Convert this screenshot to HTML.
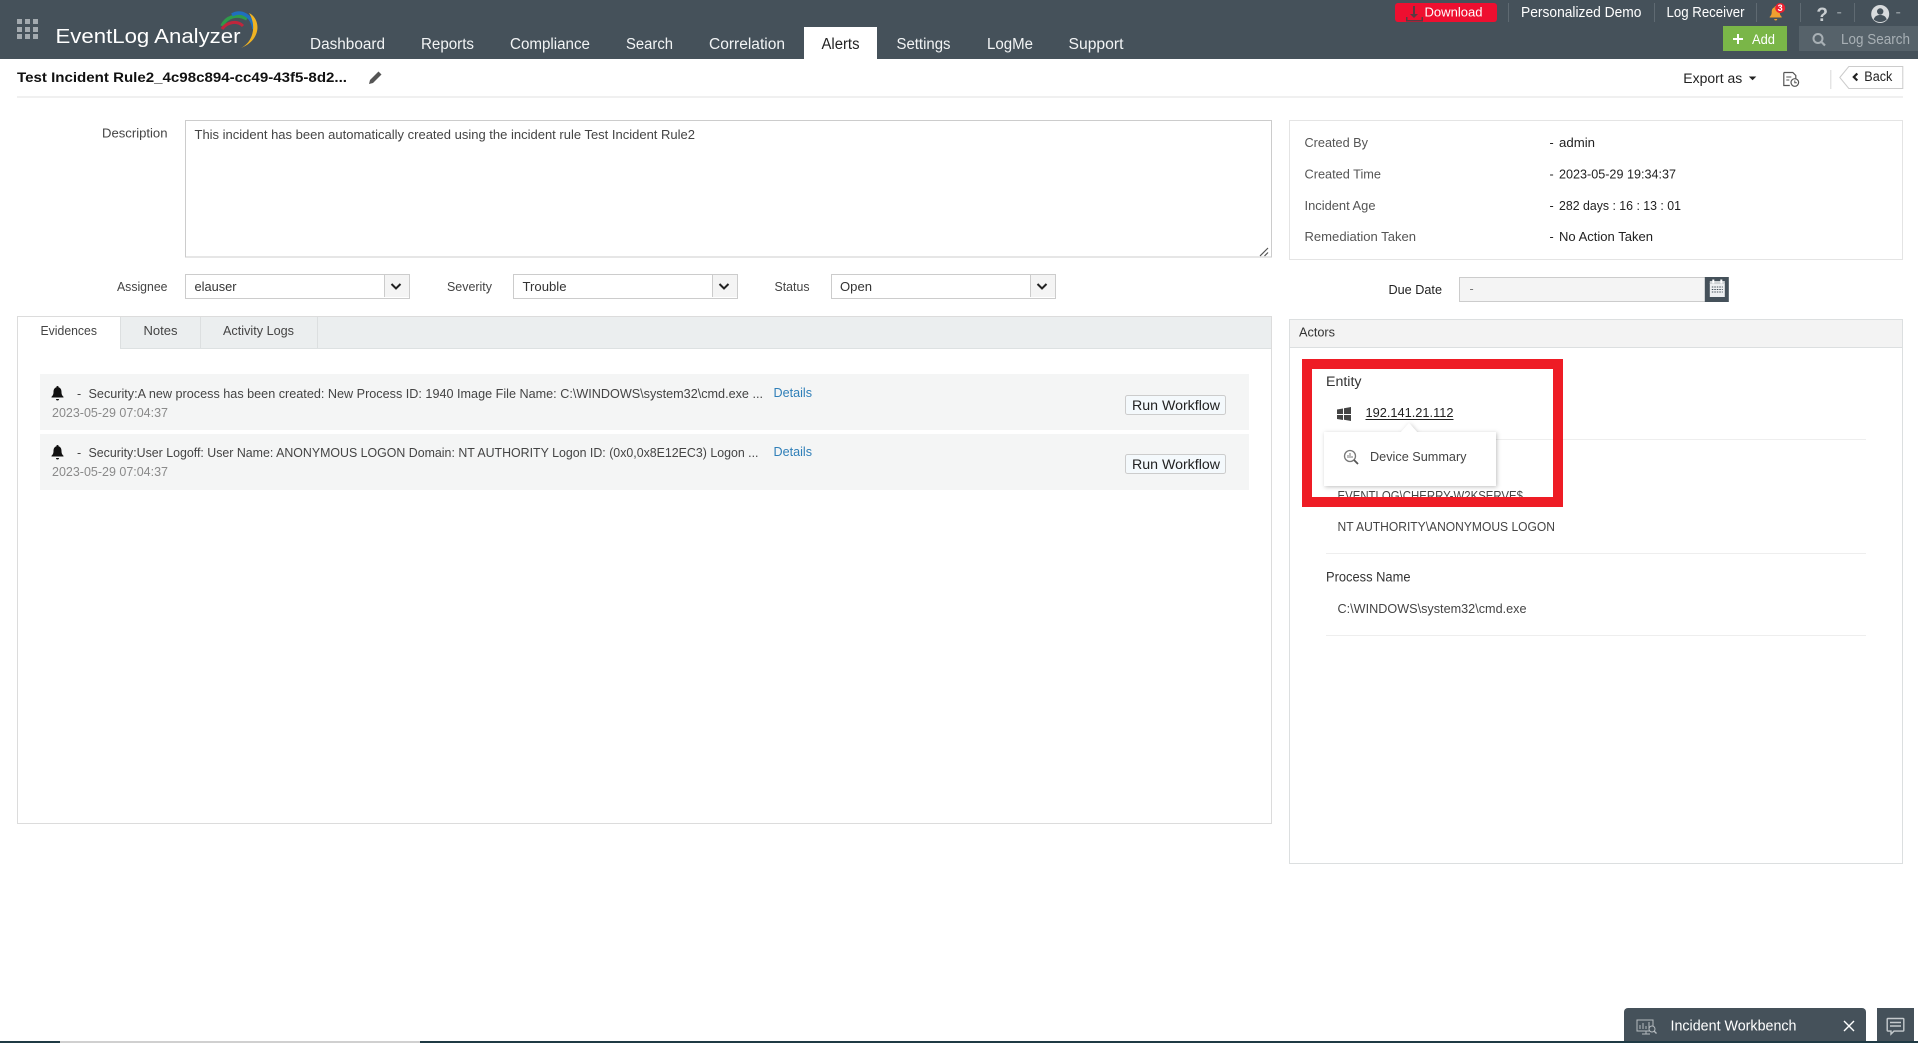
<!DOCTYPE html>
<html lang="en">
<head>
<meta charset="utf-8">
<title>EventLog Analyzer - Incident</title>
<style>
html,body{margin:0;padding:0;background:#fff;width:1918px;height:1043px;overflow:hidden}
svg{display:block;font-family:"Liberation Sans",Arial,sans-serif}
text{white-space:pre}
</style>
</head>
<body>
<svg xmlns="http://www.w3.org/2000/svg" width="1918" height="1043" viewBox="0 0 1918 1043">
<rect width="1918" height="1043" fill="#fff"/>

<!-- Header -->
<g>
<rect width="1918" height="59" fill="#45515a"/>
<g fill="#a3aaaf">
<rect x="17" y="19" width="5" height="5"/><rect x="25" y="19" width="5" height="5"/><rect x="33" y="19" width="5" height="5"/>
<rect x="17" y="27" width="5" height="5"/><rect x="25" y="27" width="5" height="5"/><rect x="33" y="27" width="5" height="5"/>
<rect x="17" y="34" width="5" height="5"/><rect x="25" y="34" width="5" height="5"/><rect x="33" y="34" width="5" height="5"/>
</g>
<text x="55.500" y="43" font-size="20.500" fill="#fff" textLength="185" lengthAdjust="spacingAndGlyphs">EventLog Analyzer</text>
<path d="M222 26C226 17 237 13 247 19" fill="none" stroke="#2f9a4a" stroke-width="3.500"/>
<path d="M222 29C227 22 237 20 243 26" fill="none" stroke="#c0263c" stroke-width="3"/>
<path d="M232 15C241 10 252 15 254 29" fill="none" stroke="#1f6fbf" stroke-width="3.500"/>
<path d="M249 13C260 18 263 39 241 48C253 42 257 26 249 13Z" fill="#f0b323"/>

<rect x="804" y="27" width="73" height="32" fill="#fff"/>
<g font-size="15.500" fill="#f2f4f5">
<text x="310" y="49" textLength="75" lengthAdjust="spacingAndGlyphs">Dashboard</text>
<text x="421" y="49" textLength="53" lengthAdjust="spacingAndGlyphs">Reports</text>
<text x="510" y="49" textLength="80" lengthAdjust="spacingAndGlyphs">Compliance</text>
<text x="626" y="49" textLength="47" lengthAdjust="spacingAndGlyphs">Search</text>
<text x="709" y="49" textLength="76" lengthAdjust="spacingAndGlyphs">Correlation</text>
<text x="821.500" y="49" textLength="38" lengthAdjust="spacingAndGlyphs" fill="#222">Alerts</text>
<text x="896.500" y="49" textLength="54" lengthAdjust="spacingAndGlyphs">Settings</text>
<text x="987" y="49" textLength="46" lengthAdjust="spacingAndGlyphs">LogMe</text>
<text x="1068.500" y="49" textLength="55" lengthAdjust="spacingAndGlyphs">Support</text>
</g>

<rect x="1395" y="3" width="102" height="19" rx="3" fill="#ee0f30"/>
<path d="M1413 6h2v8h3l-4 4-4-4h3zM1406 17h1.500v3h14v-3h1.500v4.500h-17z" fill="#5a3a42"/>
<text x="1424.500" y="16.500" font-size="13" fill="#fff" textLength="58" lengthAdjust="spacingAndGlyphs">Download</text>
<g fill="#5f6a72">
<rect x="1508" y="3" width="1" height="19"/><rect x="1654" y="3" width="1" height="19"/><rect x="1756" y="3" width="1" height="19"/><rect x="1800" y="3" width="1" height="19"/><rect x="1854" y="3" width="1" height="19"/>
</g>
<text x="1521" y="17" font-size="14.500" fill="#fff" textLength="120.500" lengthAdjust="spacingAndGlyphs">Personalized Demo</text>
<text x="1666.500" y="17" font-size="14.500" fill="#fff" textLength="78" lengthAdjust="spacingAndGlyphs">Log Receiver</text>
<g transform="translate(-1.800 0)">
<path transform="translate(1771.500 6)" d="M6 0a1 1 0 0 1 1 1.200c2.300.6 3 2.600 3 4.800 0 2.500.7 3.600 2 4.800v.7H0v-.7c1.300-1.200 2-2.300 2-4.800 0-2.200.7-4.200 3-4.800A1 1 0 0 1 6 0zM4.500 13h3a1.500 1.500 0 0 1-3 0z" fill="#f0a030"/>
<circle cx="1782" cy="8" r="5" fill="#ee2030"/>
<text x="1782" y="11" font-size="9" font-weight="bold" fill="#fff" text-anchor="middle">3</text>
<text x="1824" y="21" font-size="19" font-weight="bold" fill="#c9ced1" text-anchor="middle">?</text>
<rect x="1839" y="12" width="4" height="1.500" fill="#8d969c"/>
<circle cx="1882" cy="14" r="9" fill="#d8dbdd"/>
<circle cx="1882" cy="11.500" r="3.200" fill="#45515a"/>
<path d="M1875.500 19.500c1-3.500 3.500-4.500 6.500-4.500s5.500 1 6.500 4.500c-2 1.800-4 2.500-6.500 2.500s-4.500-.7-6.500-2.500z" fill="#45515a"/>
<rect x="1898" y="12" width="4" height="1.500" fill="#8d969c"/>
</g>

<rect x="1723" y="26" width="64" height="25" fill="#7ab648"/>
<path d="M1737 34h2v4h4v2h-4v4h-2v-4h-4v-2h4z" fill="#fff"/>
<text x="1752" y="44" font-size="13.500" fill="#fff" textLength="23" lengthAdjust="spacingAndGlyphs">Add</text>
<rect x="1799" y="26" width="119" height="25" fill="#56626a"/>
<circle cx="1818" cy="38.500" r="4.500" fill="none" stroke="#a8b0b5" stroke-width="2"/>
<path d="M1821.500 42l3.500 3.500" stroke="#a8b0b5" stroke-width="2.200"/>
<text x="1841" y="44" font-size="14.500" fill="#a8b0b5" textLength="69" lengthAdjust="spacingAndGlyphs">Log Search</text>
</g>

<!-- Title row -->
<g>
<text x="17" y="82" font-size="13.500" font-weight="bold" fill="#111" textLength="330" lengthAdjust="spacingAndGlyphs">Test Incident Rule2_4c98c894-cc49-43f5-8d2...</text>
<path d="M369 84l1-4 8.500-8.500 3 3L373 83z" fill="#555"/>
<rect x="17" y="96.500" width="1886" height="1" fill="#e2e2e2"/>
<g transform="translate(-1.700 0)">
<text x="1685" y="83" font-size="13.500" fill="#222" textLength="59" lengthAdjust="spacingAndGlyphs">Export as</text>
<path d="M1750.500 76.500h7.500l-3.750 3.700z" fill="#222"/>
<path d="M1785.500 72.500h9l3 3v3M1785.500 72.500v13h6" fill="none" stroke="#555" stroke-width="1.200"/>
<circle cx="1796.500" cy="82.500" r="3.800" fill="#fff" stroke="#555" stroke-width="1.200"/>
<path d="M1796.500 80.500v2.200h2M1788 77h5M1788 80h3" fill="none" stroke="#555"/>
<rect x="1832" y="70" width="1" height="19" fill="#d8d8d8"/>
<path d="M1841.500 77.500l9-11h54v22h-54z" fill="#fff" stroke="#ccc"/>
<path d="M1859 73.500l-3.500 3.500 3.500 3.500" fill="none" stroke="#222" stroke-width="2.200"/>
<text x="1866" y="81" font-size="13.500" fill="#222" textLength="28" lengthAdjust="spacingAndGlyphs">Back</text>
</g>
</g>

<!-- Description and fields -->
<g font-size="12.500" fill="#444">
<text x="102" y="137.500" textLength="65.500" lengthAdjust="spacingAndGlyphs">Description</text>
<rect x="185.500" y="120.500" width="1086" height="136.500" fill="#fff" stroke="#ccc"/>
<text x="194.500" y="139" textLength="500.500" lengthAdjust="spacingAndGlyphs">This incident has been automatically created using the incident rule Test Incident Rule2</text>
<path d="M1260 256l8-8M1264.500 256l3.500-3.500" stroke="#555" stroke-width="1.200"/>

<text x="117" y="291" textLength="50.500" lengthAdjust="spacingAndGlyphs">Assignee</text>
<rect x="185.500" y="274.500" width="224" height="24" fill="#fff" stroke="#ccc"/>
<rect x="384" y="275" width="25" height="22" fill="#f4f4f4"/><rect x="384" y="275" width="1" height="22" fill="#ccc"/>
<path d="M391.500 284l4.500 4.500 4.500-4.500" fill="none" stroke="#222" stroke-width="2"/>
<text x="194.500" y="291" fill="#333" textLength="42" lengthAdjust="spacingAndGlyphs">elauser</text>

<text x="447" y="291" textLength="45" lengthAdjust="spacingAndGlyphs">Severity</text>
<rect x="513.500" y="274.500" width="224" height="24" fill="#fff" stroke="#ccc"/>
<rect x="712" y="275" width="25" height="22" fill="#f4f4f4"/><rect x="712" y="275" width="1" height="22" fill="#ccc"/>
<path d="M719.500 284l4.500 4.500 4.500-4.500" fill="none" stroke="#222" stroke-width="2"/>
<text x="522.500" y="291" fill="#333" textLength="44" lengthAdjust="spacingAndGlyphs">Trouble</text>

<text x="774.500" y="291" textLength="35" lengthAdjust="spacingAndGlyphs">Status</text>
<rect x="831.500" y="274.500" width="224" height="24" fill="#fff" stroke="#ccc"/>
<rect x="1030" y="275" width="25" height="22" fill="#f4f4f4"/><rect x="1030" y="275" width="1" height="22" fill="#ccc"/>
<path d="M1037.500 284l4.500 4.500 4.500-4.500" fill="none" stroke="#222" stroke-width="2"/>
<text x="840" y="291" fill="#333" textLength="32" lengthAdjust="spacingAndGlyphs">Open</text>
</g>

<!-- Tabs panel -->
<g font-size="12.500" fill="#444">
<rect x="17.500" y="316.500" width="1254" height="507" fill="#fff" stroke="#dcdcdc"/>
<rect x="18" y="317" width="1253" height="31" fill="#ebeeef"/>
<rect x="18" y="348" width="1253" height="1" fill="#dde1e2"/>
<rect x="18" y="317" width="102" height="32" fill="#fff"/>
<rect x="120" y="317" width="1" height="31" fill="#dcdfe0"/><rect x="200" y="317" width="1" height="31" fill="#dcdfe0"/><rect x="317" y="317" width="1" height="31" fill="#dcdfe0"/>
<text x="40.500" y="335" textLength="56.500" lengthAdjust="spacingAndGlyphs">Evidences</text>
<text x="143.500" y="335" textLength="34" lengthAdjust="spacingAndGlyphs">Notes</text>
<text x="223" y="335" textLength="71" lengthAdjust="spacingAndGlyphs">Activity Logs</text>

<rect x="40" y="374" width="1209" height="56" fill="#f4f5f5"/>
<path transform="translate(51.500 386)" d="M6 0a1 1 0 0 1 1 1.200c2.300.6 3 2.600 3 4.800 0 2.500.7 3.600 2 4.800v.7H0v-.7c1.300-1.200 2-2.300 2-4.800 0-2.200.7-4.200 3-4.800A1 1 0 0 1 6 0zM4.500 13h3a1.500 1.500 0 0 1-3 0z" fill="#111"/>
<text x="77" y="398" fill="#444">-</text>
<text x="88.500" y="398" textLength="674.500" lengthAdjust="spacingAndGlyphs">Security:A new process has been created: New Process ID: 1940 Image File Name: C:\WINDOWS\system32\cmd.exe ...</text>
<text x="52" y="417" fill="#8a8a8a" textLength="116" lengthAdjust="spacingAndGlyphs">2023-05-29 07:04:37</text>
<text x="773.500" y="397" fill="#2f7fb8" textLength="38.500" lengthAdjust="spacingAndGlyphs">Details</text>
<rect x="1125.500" y="395.500" width="100" height="19" rx="2" fill="#f4f9fc" stroke="#ccc"/>
<text x="1132" y="410" font-size="14" fill="#222" textLength="88" lengthAdjust="spacingAndGlyphs">Run Workflow</text>

<rect x="40" y="434" width="1209" height="56" fill="#f4f5f5"/>
<path transform="translate(51.500 445)" d="M6 0a1 1 0 0 1 1 1.200c2.300.6 3 2.600 3 4.800 0 2.500.7 3.600 2 4.800v.7H0v-.7c1.300-1.200 2-2.300 2-4.800 0-2.200.7-4.200 3-4.800A1 1 0 0 1 6 0zM4.500 13h3a1.500 1.500 0 0 1-3 0z" fill="#111"/>
<text x="77" y="457" fill="#444">-</text>
<text x="88.500" y="457" textLength="670" lengthAdjust="spacingAndGlyphs">Security:User Logoff: User Name: ANONYMOUS LOGON Domain: NT AUTHORITY Logon ID: (0x0,0x8E12EC3) Logon ...</text>
<text x="52" y="476" fill="#8a8a8a" textLength="116" lengthAdjust="spacingAndGlyphs">2023-05-29 07:04:37</text>
<text x="773.500" y="456" fill="#2f7fb8" textLength="38.500" lengthAdjust="spacingAndGlyphs">Details</text>
<rect x="1125.500" y="454.500" width="100" height="19" rx="2" fill="#f4f9fc" stroke="#ccc"/>
<text x="1132" y="469" font-size="14" fill="#222" textLength="88" lengthAdjust="spacingAndGlyphs">Run Workflow</text>
</g>

<!-- Info panel -->
<g font-size="12.500" fill="#555">
<rect x="1289.500" y="120.500" width="613" height="139" fill="#fff" stroke="#e4e4e4"/>
<text x="1304.500" y="147" textLength="63.500" lengthAdjust="spacingAndGlyphs">Created By</text>
<text x="1304.500" y="178.700" textLength="76.500" lengthAdjust="spacingAndGlyphs">Created Time</text>
<text x="1304.500" y="210" textLength="71" lengthAdjust="spacingAndGlyphs">Incident Age</text>
<text x="1304.500" y="241" textLength="111.500" lengthAdjust="spacingAndGlyphs">Remediation Taken</text>
<g fill="#222">
<text x="1549.500" y="147">-</text><text x="1549.500" y="178.700">-</text><text x="1549.500" y="210">-</text><text x="1549.500" y="241">-</text>
<text x="1559" y="147" textLength="36" lengthAdjust="spacingAndGlyphs">admin</text>
<text x="1559" y="178.700" textLength="117" lengthAdjust="spacingAndGlyphs">2023-05-29 19:34:37</text>
<text x="1559" y="210" textLength="122" lengthAdjust="spacingAndGlyphs">282 days : 16 : 13 : 01</text>
<text x="1559" y="241" textLength="94" lengthAdjust="spacingAndGlyphs">No Action Taken</text>
</g>
<text x="1388.500" y="294" fill="#222" textLength="53.500" lengthAdjust="spacingAndGlyphs">Due Date</text>
<rect x="1459.500" y="277.500" width="246" height="24" fill="#f4f4f4" stroke="#ccc"/>
<text x="1469.500" y="293" fill="#777">-</text>
<g transform="translate(-1.200 0)">
<rect x="1706" y="277" width="24" height="25" fill="#45515a"/>
<rect x="1711" y="283" width="15" height="14" fill="#eef0f1"/>
<rect x="1711" y="281" width="15" height="3" fill="#cfd3d5"/>
<rect x="1713.500" y="279.500" width="2" height="4" fill="#fff"/><rect x="1721.500" y="279.500" width="2" height="4" fill="#fff"/>
<path d="M1713 287h11M1713 289.500h11M1713 292h11" stroke="#45515a" stroke-dasharray="1.500 1" fill="none"/>
</g>
</g>

<!-- Actors panel -->
<g font-size="13" fill="#444">
<rect x="1289.500" y="319.500" width="613" height="544" fill="#fff" stroke="#dcdfe0"/>
<rect x="1290" y="320" width="612" height="27" fill="#f3f3f3"/>
<rect x="1290" y="347" width="612" height="1" fill="#dcdfe0"/>
<text x="1299" y="336.500" fill="#333" textLength="36" lengthAdjust="spacingAndGlyphs">Actors</text>

<text x="1326" y="386" fill="#333" font-size="13.500" textLength="35.500" lengthAdjust="spacingAndGlyphs">Entity</text>
<path d="M1337 409.500l6-1v5.500h-6zM1344 408.300l7-1.300v7h-7zM1337 415h6v5l-6-1zM1344 415h7v6l-7-1.200z" fill="#444"/>
<text x="1365.500" y="417" fill="#222" textLength="88" lengthAdjust="spacingAndGlyphs">192.141.21.112</text>
<rect x="1365.500" y="419" width="88" height="1" fill="#222"/>
<rect x="1326" y="439" width="540" height="1" fill="#eee"/>

<text x="1337.500" y="500" textLength="185.500" lengthAdjust="spacingAndGlyphs">EVENTLOG\CHERRY-W2KSERVE$</text>
<text x="1337.500" y="531" textLength="217.500" lengthAdjust="spacingAndGlyphs">NT AUTHORITY\ANONYMOUS LOGON</text>
<rect x="1326" y="553" width="540" height="1" fill="#eee"/>
<text x="1326" y="581.500" fill="#333" font-size="13.500" textLength="84.500" lengthAdjust="spacingAndGlyphs">Process Name</text>
<text x="1337.500" y="613" textLength="189" lengthAdjust="spacingAndGlyphs">C:\WINDOWS\system32\cmd.exe</text>
<rect x="1326" y="635" width="540" height="1" fill="#eee"/>

<!-- Popup -->
<defs>
<filter id="popshadow" x="-10%" y="-20%" width="120%" height="140%">
<feDropShadow dx="1" dy="1" stdDeviation="2" flood-color="#000" flood-opacity="0.25"/>
</filter>
</defs>
<path d="M1324 432h77l8-9 8 9h79v54h-172z" fill="#fff" filter="url(#popshadow)"/>
<circle cx="1350" cy="456" r="5.500" fill="none" stroke="#777" stroke-width="1.300"/>
<path d="M1354 460l4 4" stroke="#555" stroke-width="1.800"/>
<path d="M1348 458v-3M1350 458v-5M1352 458v-2" stroke="#777"/>
<text x="1370" y="461" fill="#444" textLength="96.500" lengthAdjust="spacingAndGlyphs">Device Summary</text>

<!-- Annotation -->
<path fill-rule="evenodd" d="M1302 359h261v148h-261zM1312 369v128h241v-128z" fill="#ee1c25"/>
</g>

<!-- Bottom -->
<g>
<rect x="0" y="1041" width="1918" height="2" fill="#1f3a44"/>
<rect x="60" y="1041" width="360" height="2" fill="#d0d0d0"/>
<path d="M1624 1041v-29a4 4 0 0 1 4-4h234a4 4 0 0 1 4 4v29z" fill="#45515a"/>
<rect x="1637" y="1020" width="16" height="11" fill="none" stroke="#b5bbbf" stroke-width="1"/>
<path d="M1640 1029v-4M1643 1029v-6M1646 1029v-3M1649 1029v-7M1642 1034h8M1646 1031v3" stroke="#b5bbbf" fill="none"/>
<circle cx="1652" cy="1029" r="3" fill="#45515a" stroke="#b5bbbf"/>
<path d="M1654 1031l2.500 2.500" stroke="#b5bbbf" stroke-width="1.300"/>
<text x="1670.500" y="1030.500" font-size="14.500" fill="#fff" textLength="126" lengthAdjust="spacingAndGlyphs">Incident Workbench</text>
<path d="M1844 1021l10 10M1854 1021l-10 10" stroke="#fff" stroke-width="1.400"/>
<rect x="1877" y="1008" width="37" height="33" fill="#45515a"/>
<path d="M1888 1018.500h15a.8.8 0 0 1 .8.8v11a.8.8 0 0 1-.8.8h-9l-3 3v-3h-3a.8.8 0 0 1-.8-.8v-11a.8.8 0 0 1 .8-.8z" fill="none" stroke="#c5cacd" stroke-width="1.400"/>
<path d="M1890 1022.500h11M1890 1026h11" stroke="#c5cacd" stroke-width="1.400"/>
</g>
</svg>
</body>
</html>
